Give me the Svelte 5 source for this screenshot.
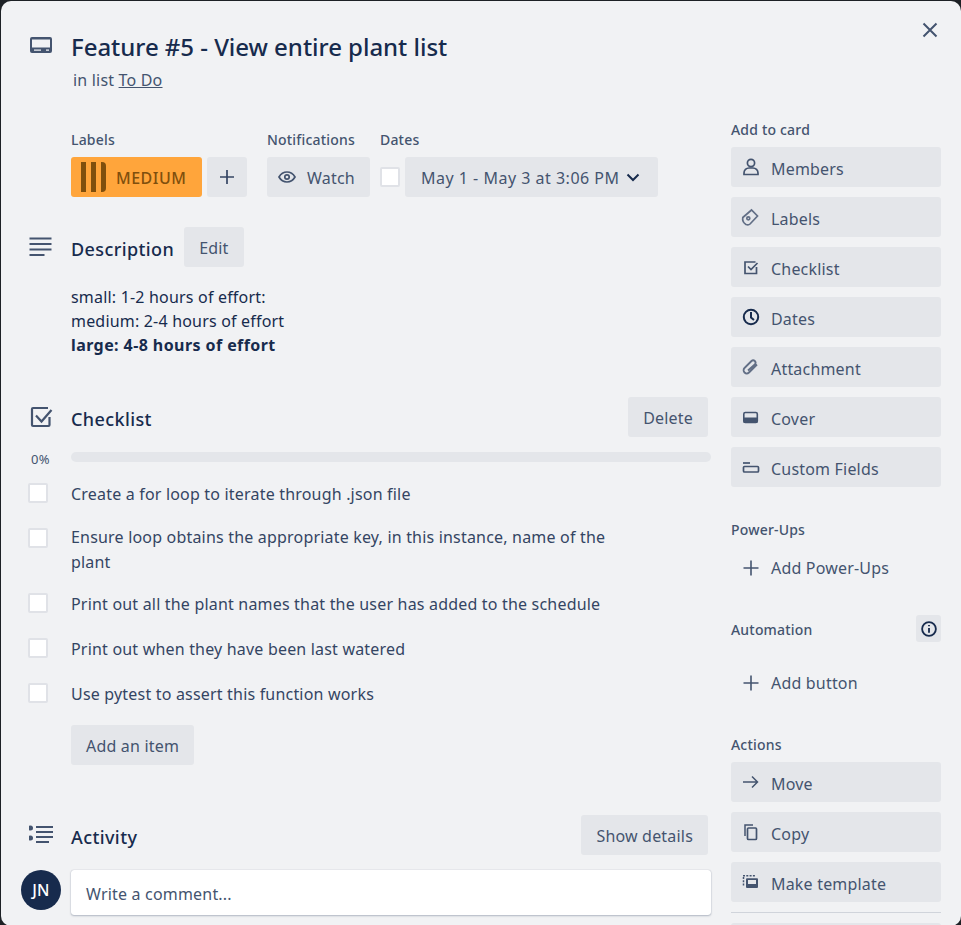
<script>
	const addItems = [
		{ name: 'Members', icon: 'member' },
		{ name: 'Labels', icon: 'label' },
		{ name: 'Checklist', icon: 'check' },
		{ name: 'Dates', icon: 'clock' },
		{ name: 'Attachment', icon: 'clip' },
		{ name: 'Cover', icon: 'cover' },
		{ name: 'Custom Fields', icon: 'fields' }
	];
	const actions = [
		{ name: 'Move', icon: 'arrow' },
		{ name: 'Copy', icon: 'copy' },
		{ name: 'Make template', icon: 'template' }
	];
	const items = [
		'Create a for loop to iterate through .json file',
		'Ensure loop obtains the appropriate key, in this instance, name of the plant',
		'Print out all the plant names that the user has added to the schedule',
		'Print out when they have been last watered',
		'Use pytest to assert this function works'
	];
</script>

{#snippet icon(name)}
	<svg class="ico" viewBox="0 0 24 24" width="24" height="24" fill="none" stroke="#44546f" stroke-width="1.700">
		{#if name === 'member'}
			<circle cx="12" cy="8" r="3.600" />
			<path d="M5 19.500v-1.500a5 5 0 0 1 5-5h4a5 5 0 0 1 5 5v1.500z" />
		{:else if name === 'label'}
			<path d="M3.800 12.500 12.500 5l6 6-7.500 8q-1.500 1.500-4 .5-4-2.500-3.200-7z" stroke="#626f86" />
			<circle cx="9.300" cy="13.300" r="1.500" stroke="#626f86" />
		{:else if name === 'check'}
			<path d="M17.500 12v6.500H6V7h10.500" />
			<path d="m9 11.500 3 3 6.500-6.500" />
		{:else if name === 'clock'}
			<circle cx="12" cy="12" r="7.200" stroke="#172b4d" stroke-width="2" />
			<path d="M12 7v5.500l3 2.500" stroke="#172b4d" stroke-width="2" />
		{:else if name === 'clip'}
			<path d="M18 9.500 10 17.500a3 3 0 0 1-4.500-4.500L12.500 6a2.300 2.300 0 0 1 3.300 3.300L9 15.500" stroke="#626f86" stroke-width="1.800" />
		{:else if name === 'cover'}
			<rect x="4.800" y="7.500" width="13.500" height="10" rx="1.500" stroke-width="1.600" />
			<rect x="4.500" y="12.500" width="14" height="5.500" rx="1" fill="#44546f" stroke="none" />
		{:else if name === 'fields'}
			<path d="M4 8h7" />
			<rect x="4.500" y="11.500" width="15" height="5.500" rx="1" />
		{:else if name === 'arrow'}
			<path d="M4 12h14.500M13 6.500l5.500 5.500-5.500 5.500" stroke-width="1.500" />
		{:else if name === 'copy'}
			<rect x="8.500" y="8" width="9" height="11.500" rx="1" />
			<path d="M6 16V5h8" stroke-width="1.500" />
		{:else if name === 'template'}
			<rect x="7" y="8.300" width="12" height="9.700" rx="1" fill="#44546f" stroke="none" />
			<rect x="9" y="10" width="8" height="4" fill="#e4e6ea" stroke="none" />
			<path d="M4 5.800h13M4.500 7v9" stroke-dasharray="2 1.300" stroke-width="1.500" />
		{/if}
	</svg>
{/snippet}

<div class="card">
	<button class="close" type="button" aria-label="Close">
		<svg viewBox="0 0 24 24" width="24" height="24" fill="none" stroke="#44546f" stroke-width="2"><path d="m5.500 5.500 13 13M18.500 5.500l-13 13" /></svg>
	</button>

	<header class="head">
		<svg class="side-ico" viewBox="0 0 24 24" width="24" height="24">
			<path fill="#44546f" fill-rule="evenodd" d="M3 4h18a2 2 0 0 1 2 2v12a2 2 0 0 1-2 2H3a2 2 0 0 1-2-2V6a2 2 0 0 1 2-2zM3 6.500v8h18v-8zm2 10v1.200h7v-1.200zm12 0v1.200h3v-1.200z" />
		</svg>
		<div>
			<h1>Feature #5 - View entire plant list</h1>
			<p class="inlist">in list <u>To Do</u></p>
		</div>
	</header>

	<div class="cols">
		<main class="left">
			<div class="meta">
				<div>
					<h3>Labels</h3>
					<div class="row">
						<span class="label"><span class="stripes"><i></i><i></i><i></i></span><span class="t">MEDIUM</span></span>
						<button class="btn square" type="button" aria-label="Add label">
							<svg viewBox="0 0 24 24" width="24" height="24" fill="none" stroke="#344563" stroke-width="1.700"><path d="M12 5v14M5 12h14" /></svg>
						</button>
					</div>
				</div>
				<div>
					<h3>Notifications</h3>
					<button class="btn watch" type="button">
						<svg viewBox="0 0 24 24" width="24" height="24" fill="none" stroke="#44546f" stroke-width="1.700"><path d="M4 12c2-3.500 5-5 8-5s6 1.500 8 5c-2 3.500-5 5-8 5s-6-1.500-8-5z" /><circle cx="12" cy="12" r="2.200" /></svg>
						<span class="t">Watch</span>
					</button>
				</div>
				<div>
					<h3>Dates</h3>
					<div class="row dates">
						<span class="box"></span>
						<button class="btn date" type="button">
							<span class="t">May 1 - May 3 at 3:06 PM</span>
							<svg viewBox="0 0 24 24" width="24" height="24" fill="none" stroke="#172b4d" stroke-width="2"><path d="m6.500 9.500 5.500 5.500 5.500-5.500" /></svg>
						</button>
					</div>
				</div>
			</div>

			<section class="desc">
				<svg class="side-ico" viewBox="0 0 24 24" width="24" height="24" fill="none" stroke="#44546f" stroke-width="2"><path d="M.5 3.500h22M.5 9h22M.5 14.500h22M.5 20h15" /></svg>
				<div class="sec-head">
					<h2>Description</h2>
					<button class="btn edit" type="button"><span class="t">Edit</span></button>
				</div>
				<div class="desc-text">
					<p>small: 1-2 hours of effort:</p>
					<p>medium: 2-4 hours of effort</p>
					<p><strong>large: 4-8 hours of effort</strong></p>
				</div>
			</section>

			<section class="checklist">
				<svg class="side-ico" viewBox="0 0 24 24" width="24" height="24" fill="none" stroke="#44546f" stroke-width="2.200"><path d="M20.500 12v8a1 1 0 0 1-1 1H4a1 1 0 0 1-1-1V4a1 1 0 0 1 1-1h15" /><path d="m7 10.500 5.500 6 10-11.500" /></svg>
				<div class="sec-head spread">
					<h2>Checklist</h2>
					<button class="btn edit" type="button"><span class="t">Delete</span></button>
				</div>
				<div class="progress">
					<span class="pct">0%</span>
					<div class="bar"></div>
				</div>
				<ul>
					{#each items as item}
						<li><span class="box"></span><span class="txt">{item}</span></li>
					{/each}
				</ul>
				<button class="btn add-item" type="button"><span class="t">Add an item</span></button>
			</section>

			<section class="activity">
				<svg class="side-ico" viewBox="0 0 24 24" width="24" height="24" fill="none" stroke="#44546f" stroke-width="2"><path d="M7 4h17M7 9h17M7 14h17M7 19h13" /><circle cx="1.500" cy="5" r="2.500" fill="#44546f" stroke="none" /><circle cx="1.500" cy="15" r="2.500" fill="#44546f" stroke="none" /></svg>
				<div class="sec-head spread">
					<h2>Activity</h2>
					<button class="btn edit" type="button"><span class="t">Show details</span></button>
				</div>
				<div class="comment">
					<span class="avatar">JN</span>
					<div class="input">Write a comment...</div>
				</div>
			</section>
		</main>

		<aside class="right">
			<h3>Add to card</h3>
			{#each addItems as a}
				<button class="btn side" type="button">{@render icon(a.icon)}<span class="t">{a.name}</span></button>
			{/each}

			<h3 class="gap">Power-Ups</h3>
			<div class="plain">
				<svg class="ico" viewBox="0 0 24 24" width="24" height="24" fill="none" stroke="#44546f" stroke-width="1.600"><path d="M12 4.500v15M4.500 12h15" /></svg>
				<span class="t">Add Power-Ups</span>
			</div>

			<div class="auto-head">
				<h3>Automation</h3>
				<span class="info">
					<svg viewBox="0 0 24 24" width="24" height="24" fill="none" stroke="#172b4d" stroke-width="2"><circle cx="12" cy="12" r="7.500" /><path d="M12 11v5M12 7.500v1.500" /></svg>
				</span>
			</div>
			<div class="plain">
				<svg class="ico" viewBox="0 0 24 24" width="24" height="24" fill="none" stroke="#44546f" stroke-width="1.600"><path d="M12 4.500v15M4.500 12h15" /></svg>
				<span class="t">Add button</span>
			</div>

			<h3 class="gap">Actions</h3>
			{#each actions as a}
				<button class="btn side" type="button">{@render icon(a.icon)}<span class="t">{a.name}</span></button>
			{/each}
			<hr />
			<div class="btn side"></div>
		</aside>
	</div>
</div>

<style>
	:global(body) {
		background: #1d2125;
		overflow: hidden;
	}
	.card {
		position: relative;
		box-sizing: border-box;
		height: 925px;
		margin: 1px 0 0 1px;
		background: #f1f2f4;
		border-radius: 10px;
		color: #172b4d;
		font-family: "Noto Sans", sans-serif;
		font-size: 16px;
		line-height: 24px;
		letter-spacing: 0.19px;
		overflow: hidden;
	}
	h1, h2, h3, p, ul {
		margin: 0;
		padding: 0;
	}
	button {
		font: inherit;
		letter-spacing: inherit;
		border: 0;
	}
	.t {
		padding-top: 2px;
	}
	.close {
		position: absolute;
		top: 17px;
		right: 19px;
		width: 24px;
		height: 24px;
		padding: 0;
		background: none;
	}
	.head {
		position: relative;
		padding: 30px 0 0 70px;
	}
	.side-ico {
		position: absolute;
		left: 28px;
		top: 0;
	}
	.head .side-ico {
		top: 32px;
	}
	h1 {
		font-size: 24px;
		line-height: 32px;
		font-weight: 500;
		letter-spacing: -0.03px;
	}
	.inlist {
		margin-top: 5px;
		padding-left: 2px;
		color: #44546f;
		line-height: 24px;
	}
	.cols {
		display: flex;
		padding-left: 70px;
	}
	.left {
		width: 640px;
		padding-top: 38px;
		flex: none;
	}
	.right {
		width: 210px;
		margin-left: 20px;
		padding-top: 28px;
	}
	h3 {
		font-size: 14px;
		line-height: 20px;
		font-weight: 500;
		color: #44546f;
	}
	.meta {
		display: flex;
		gap: 20px;
	}
	.meta h3 {
		margin-bottom: 7px;
	}
	.row {
		display: flex;
		gap: 5px;
	}
	.btn {
		display: flex;
		align-items: center;
		box-sizing: border-box;
		height: 40px;
		background: #e4e6ea;
		border-radius: 3px;
		color: #44546f;
		white-space: nowrap;
	}
	.label {
		display: flex;
		align-items: center;
		width: 131px;
		height: 40px;
		padding-left: 10px;
		box-sizing: border-box;
		background: #ffa53b;
		border-radius: 3px;
		color: #7f4f0d;
		font-weight: 500;
		letter-spacing: 0.5px;
	}
	.stripes {
		display: flex;
		gap: 5px;
		margin-right: 10px;
	}
	.stripes i {
		width: 5px;
		height: 30px;
		background: #7f4f0d;
	}
	.stripes i:last-child {
		border-radius: 0 4px 4px 0;
	}
	.square {
		width: 40px;
		justify-content: center;
		padding: 0;
	}
	.watch {
		width: 103px;
		padding: 0 0 0 8px;
		gap: 8px;
	}
	.dates {
		gap: 5px;
		align-items: center;
	}
	.meta > div:last-child {
		margin-left: -10px;
	}
	.box {
		display: block;
		flex: none;
		box-sizing: border-box;
		width: 20px;
		height: 20px;
		background: #fff;
		border: 2px solid #e0e2e7;
		border-radius: 2px;
	}
	.date {
		width: 253px;
		padding: 0 0 0 16px;
		gap: 1px;
		letter-spacing: 0.5px;
	}
	.desc, .checklist, .activity {
		position: relative;
	}
	.desc .side-ico {
		left: -42px;
		top: 8px;
	}
	.desc {
		margin-top: 30px;
	}
	.sec-head {
		display: flex;
		align-items: center;
		gap: 10px;
		height: 40px;
	}
	.sec-head.spread {
		justify-content: space-between;
		padding-right: 3px;
	}
	h2 {
		font-size: 18px;
		line-height: 24px;
		font-weight: 500;
		color: #172b4d;
		padding-top: 4px;
		letter-spacing: 0.4px;
	}
	.edit {
		padding: 0 15px;
	}
	.desc-text {
		margin-top: 18px;
	}
	strong {
		letter-spacing: 0.42px;
	}
	.checklist {
		margin-top: 40px;
	}
	.checklist .side-ico {
		left: -42px;
		top: 8px;
	}
	.progress {
		position: relative;
		margin-top: 15px;
	}
	.pct {
		position: absolute;
		left: -40px;
		top: -1px;
		font-size: 13px;
		line-height: 16px;
		color: #44546f;
	}
	.bar {
		height: 10px;
		border-radius: 5px;
		background: #e4e6ea;
	}
	ul {
		list-style: none;
		margin-top: 10px;
	}
	li {
		position: relative;
		display: flex;
		align-items: center;
		box-sizing: border-box;
		min-height: 45px;
		padding: 7.5px 105px 7.5px 0;
		color: #344563;
		line-height: 25px;
	}
	li .box {
		position: absolute;
		left: -43px;
		top: 11px;
	}
	.add-item {
		margin-top: 8px;
		padding: 0 15px;
	}
	.activity {
		margin-top: 50px;
	}
	.activity .side-ico {
		left: -42px;
		top: 8px;
	}
	.comment {
		position: relative;
		margin-top: 15px;
	}
	.avatar {
		position: absolute;
		left: -50px;
		top: 0;
		width: 40px;
		height: 40px;
		border-radius: 50%;
		background: #172b4d;
		color: #fff;
		display: flex;
		align-items: center;
		justify-content: center;
		font-weight: 500;
	}
	.input {
		box-sizing: border-box;
		height: 45px;
		padding: 12px 15px;
		background: #fff;
		border-radius: 3px;
		box-shadow: 0 1px 2px rgba(9, 30, 66, 0.25), 0 0 1px rgba(9, 30, 66, 0.31);
		color: #44546f;
	}
	.side {
		width: 210px;
		margin-top: 10px;
		padding: 0 0 0 8px;
		gap: 8px;
	}
	.side .t {
		padding-top: 4px;
	}
	h3 + .side {
		margin-top: 7px;
	}
	.gap {
		margin-top: 33px;
	}
	.plain {
		display: flex;
		align-items: center;
		gap: 8px;
		height: 40px;
		margin-top: 7px;
		padding-left: 8px;
		color: #44546f;
	}
	.plain .ico {
		margin-top: 2px;
	}
	.auto-head {
		display: flex;
		justify-content: space-between;
		align-items: center;
		margin-top: 28px;
	}
	.auto-head h3 {
		padding-top: 3px;
	}
	.auto-head + .plain {
		margin-top: 20px;
	}
	.info {
		display: flex;
		align-items: center;
		justify-content: center;
		width: 25px;
		height: 27px;
		background: #e4e6ea;
		border-radius: 3px;
	}
	.info svg {
		width: 22px;
		height: 22px;
	}
	hr {
		margin: 10px 0 0;
		border: 0;
		border-top: 1px solid #d0d4db;
	}
</style>
